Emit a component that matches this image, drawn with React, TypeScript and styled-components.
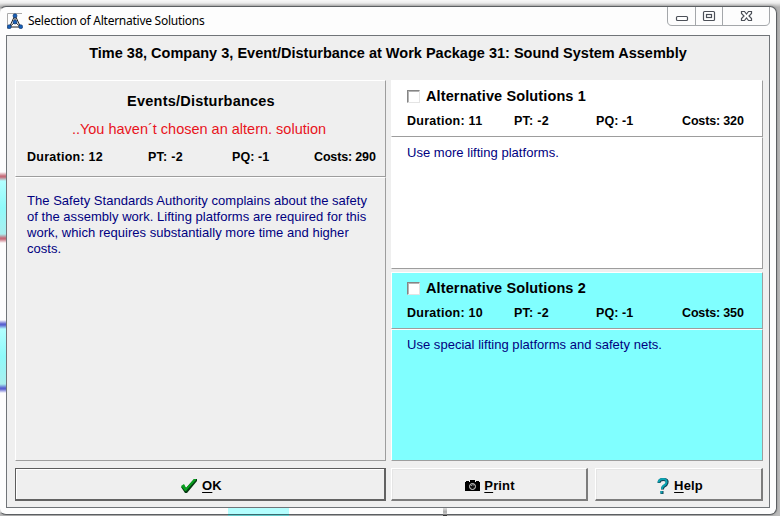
import React from "react";
import styled, { createGlobalStyle } from "styled-components";

const GlobalStyle = createGlobalStyle`
  * { box-sizing: border-box; }
  body { margin: 0; overflow: hidden; font-family: "Liberation Sans", Arial, sans-serif; color: #000; }
`;

const Desktop = styled.main`
  position: relative;
  width: 780px;
  height: 516px;
  padding-top: 6px;
  overflow: hidden;
  background: linear-gradient(#f8f8f8 0, #ececec 3px, #b4b4b4 7px, #bcbcbc 100%);
`;

const Frame = styled.section`
  width: 778px;
  height: 509px;
  margin-left: -1px;
  padding: 0 6px;
  border: 1px solid #5c5f62;
  border-left-color: #d8d8d8;
  border-radius: 7px;
  background: #fdfdfd;
  box-shadow: 0 0 3px #888;
`;

const TitleBar = styled.header`
  display: flex;
  height: 28px;
  align-items: flex-start;
`;

const AppIcon = styled.svg`
  width: 16px;
  height: 16px;
  margin: 6px 0 0 1px;
  flex: none;
`;

const Caption = styled.h1`
  margin: 5px auto 0 5px;
  font: 400 12px/17px "Noto Sans", sans-serif;
  letter-spacing: -0.26px;
  white-space: nowrap;
`;

const WindowControls = styled.svg`
  width: 103px;
  height: 20px;
  flex: none;
`;

const Client = styled.div`
  width: 764px;
  height: 473px;
  padding: 0 6px 0 8px;
  border: 1px solid #707478;
  background: #efefef;
`;

const Heading = styled.h2`
  height: 44px;
  margin: 0 2px 0 0;
  font-size: 14.5px;
  letter-spacing: 0.01px;
  line-height: 34px;
  text-align: center;
  white-space: nowrap;
`;

const Columns = styled.div`
  display: grid;
  grid-template-columns: 371px 372px;
  column-gap: 5px;
  height: 381px;
`;

const Stack = styled.div`
  display: flex;
  flex-direction: column;
`;

const Panel = styled.div<{ $h: number; $bg?: string; $gap?: number }>`
  height: ${(p) => p.$h}px;
  margin-bottom: ${(p) => p.$gap ?? 0}px;
  padding: 0 0 0 ${(p) => (p.$bg ? 15 : 11)}px;
  border: 1px solid;
  border-color: #fff #9d9d9d #9d9d9d #fff;
  background: ${(p) => p.$bg ?? "#efefef"};
`;

const EventTitle = styled.h3`
  margin: 10px 10px 0 0;
  font-size: 14.5px;
  letter-spacing: 0.23px;
  line-height: 20px;
  text-align: center;
`;

const Warning = styled.p`
  margin: 8px 14px 0 0;
  font-size: 14.5px;
  line-height: 20px;
  color: #e8141c;
  text-align: center;
`;

const Stats = styled.div<{ $cols: string; $top: number }>`
  display: grid;
  grid-template-columns: ${(p) => p.$cols};
  margin-top: ${(p) => p.$top}px;
  font-size: 12.5px;
  font-weight: 700;
  line-height: 16px;
  white-space: nowrap;
`;

const Metric = styled.span<{ $spacing: number }>`
  letter-spacing: ${(p) => p.$spacing}px;
`;

const Description = styled.p<{ $top: number }>`
  margin: ${(p) => p.$top}px 0 0;
  font-size: 13px;
  letter-spacing: 0.03px;
  line-height: 16px;
  color: #000080;
  white-space: pre-line;
`;

const Choice = styled.label`
  display: flex;
  height: 20px;
  margin-top: 5px;
  align-items: center;
  gap: 6px;
  font-size: 14.5px;
  letter-spacing: 0.12px;
  font-weight: 700;
`;

const Checkbox = styled.input`
  appearance: none;
  width: 13px;
  height: 13px;
  margin: 1px 0 0;
  border: 1px solid;
  border-color: #858585 #e4e4e4 #e4e4e4 #858585;
  background: #fff;
  box-shadow: inset 1px 1px #b4b4b4;
`;

const Buttons = styled.footer`
  display: grid;
  grid-template-columns: 371px 197px 169px;
  column-gap: 5px;
  margin-top: 7px;
  & > :nth-child(3) { margin: 0 -1px 0 2px; }
`;

const Button = styled.button<{ $primary?: boolean }>`
  display: flex;
  height: 33px;
  padding: 3px 0 0 2px;
  align-items: center;
  justify-content: center;
  gap: 4px;
  border: solid;
  border-width: 1px 2px 2px 1px;
  border-color: ${(p) => (p.$primary ? "#5c5c5c #626262 #626262 #5c5c5c" : "#fff #7c7c7c #7c7c7c #fff")};
  box-shadow: ${(p) => (p.$primary ? "inset 1px 1px #fff" : "inset 1px 1px #e5e5e5")};
  background: #efefef;
  font: 700 13px/18px "Liberation Sans", Arial, sans-serif;
  letter-spacing: 0.15px;
  color: #000;
`;

const Mnemonic = styled.span`
  text-decoration: underline;
  text-decoration-thickness: 1px;
  text-underline-offset: 2px;
`;

const ButtonIcon = styled.svg`
  flex: none;
`;

const BackgroundBar = styled.i<{ $top: number; $h: number; $edge: string }>`
  position: absolute;
  left: 0;
  top: ${(p) => p.$top}px;
  width: 6px;
  height: ${(p) => p.$h}px;
  background: linear-gradient(transparent, ${(p) => p.$edge} 4px, ${(p) => p.$edge} 5px, #b2ffff 9px, #8ffafa 50%, #a9eeee calc(100% - 9px), ${(p) => p.$edge} calc(100% - 5px), ${(p) => p.$edge} calc(100% - 4px), transparent);
`;

const BottomTint = styled.i`
  position: absolute;
  left: 228px;
  top: 508px;
  width: 61px;
  height: 8px;
  background: linear-gradient(#b4ffff 0 6px, #396c70 6px 7px, #63caca 7px);
`;

const BottomMark = styled.i`
  position: absolute;
  left: 443px;
  top: 508px;
  width: 4px;
  height: 8px;
  background: linear-gradient(#ddd 0, #aaa 4px, #ccc 6px, #333 7px);
`;

type Values = [string, string, string, string];
const Metrics = ({ values, event }: { values: Values; event?: boolean }) => (
  <Stats $cols={event ? "121px 84px 82px auto" : "107px 82px 86px auto"} $top={event ? 10 : 7}>
    {values.map((v, i) => <Metric key={v} $spacing={[0.26, 0.25, 0.1, -0.15][i]}>{v}</Metric>)}
  </Stats>
);

const Alternative = ({ n, values, bg, text, bodyHeight, gap }: {
  n: number; values: Values; bg: string; text: string; bodyHeight: number; gap: number;
}) => (
  <>
    <Panel $h={57} $bg={bg}>
      <Choice><Checkbox type="checkbox" />Alternative Solutions {n}</Choice>
      <Metrics values={values} />
    </Panel>
    <Panel $h={bodyHeight} $bg={bg} $gap={gap}>
      <Description $top={7}>{text}</Description>
    </Panel>
  </>
);

export default function App() {
  return (
    <Desktop>
      <GlobalStyle />
      <Frame>
        <TitleBar>
          <AppIcon viewBox="0 0 16 16">
            <path d="M.5 16V.5H15" fill="none" stroke="#aaa" />
            <path d="M8 2 2.500 14h11zM8 2v7l-5.500 5M8 9l5.500 5" fill="none" stroke="#222" />
            <g fill="#1760b8" stroke="#0b2e62" strokeWidth=".6">
              <circle cx="8" cy="2.800" r="2" />
              <circle cx="8" cy="9" r="2" />
              <circle cx="2.300" cy="13.700" r="2" />
              <circle cx="13.700" cy="13.700" r="2" />
            </g>
          </AppIcon>
          <Caption>Selection of Alternative Solutions</Caption>
          <WindowControls viewBox="0 0 103 20">
            <path d="M.5 0v14q0 4.500 4.500 4.500h93q4.500 0 4.500-4.500V0M28.500 0v18M55.500 0v18" fill="none" stroke="#a4a7aa" />
            <g fill="#fff" stroke="#4c5058" strokeWidth="1.2">
              <rect x="9.500" y="9.500" width="11" height="4" rx="1" />
              <rect x="36.500" y="4.500" width="11" height="9" rx="1" />
              <rect x="39.500" y="7.500" width="5" height="3" />
              <path d="M74.500 4.500h3l2 2.500 2-2.500h3v2L82 9l2.500 2.500v2h-3l-2-2.500-2 2.500h-3v-2L77 9l-2.500-2.500z" />
            </g>
          </WindowControls>
        </TitleBar>
        <Client>
          <Heading>Time 38, Company 3, Event/Disturbance at Work Package 31: Sound System Assembly</Heading>
          <Columns>
            <Stack>
              <Panel $h={97}>
                <EventTitle>Events/Disturbances</EventTitle>
                <Warning>..You haven´t chosen an altern. solution</Warning>
                <Metrics event values={["Duration: 12", "PT: -2", "PQ: -1", "Costs: 290"]} />
              </Panel>
              <Panel $h={284}>
                <Description $top={15}>{"The Safety Standards Authority complains about the safety\nof the assembly work. Lifting platforms are required for this\nwork, which requires substantially more time and higher\ncosts."}</Description>
              </Panel>
            </Stack>
            <Stack>
              <Alternative n={1} bg="#fff" bodyHeight={132} gap={3} values={["Duration: 11", "PT: -2", "PQ: -1", "Costs: 320"]} text="Use more lifting platforms." />
              <Alternative n={2} bg="#80ffff" bodyHeight={132} gap={0} values={["Duration: 10", "PT: -2", "PQ: -1", "Costs: 350"]} text="Use special lifting platforms and safety nets." />
            </Stack>
          </Columns>
          <Buttons>
            <Button $primary>
              <ButtonIcon width="18" height="16" viewBox="0 0 18 16">
                <path d="m1 9 3-2 2 3 8-9h3v2L7 15H5z" fill="#063c12" />
                <path d="m1 8 3-2 2 4 8-9h2v1L6 13H5z" fill="#08a01e" />
              </ButtonIcon>
              <span><Mnemonic>O</Mnemonic>K</span>
            </Button>
            <Button>
              <ButtonIcon width="15" height="12" viewBox="0 0 15 12">
                <path d="M0 2h1V1h3v1h1V0h5v2h1V1h3v1h1v9H0z" fill="#000" />
                <circle cx="7.500" cy="6.500" r="3" fill="#111" stroke="#ddd" />
                <path d="M6 6q1-2 3-1" fill="none" stroke="#999" />
              </ButtonIcon>
              <span><Mnemonic>P</Mnemonic>rint</span>
            </Button>
            <Button>
              <ButtonIcon width="14" height="18" viewBox="0 0 14 18">
                <g fill="none" strokeWidth="3">
                  <path d="M3 6q0-3.500 4.500-3.500T11 6q-.5 2-2.500 3T6.500 12.500M6 14v3" stroke="#123f50" />
                  <path d="M2.500 5.500q.5-3.500 4.500-3.500t3.500 3.500q-.5 2-2.500 3T6 12M5.500 14v2.500" stroke="#0ba3b2" strokeWidth="2" />
                </g>
              </ButtonIcon>
              <span><Mnemonic>H</Mnemonic>elp</span>
            </Button>
          </Buttons>
        </Client>
      </Frame>
      <BackgroundBar $top={172} $h={71} $edge="#c56b78" />
      <BackgroundBar $top={320} $h={73} $edge="#5960d0" />
      <BottomTint />
      <BottomMark />
    </Desktop>
  );
}
